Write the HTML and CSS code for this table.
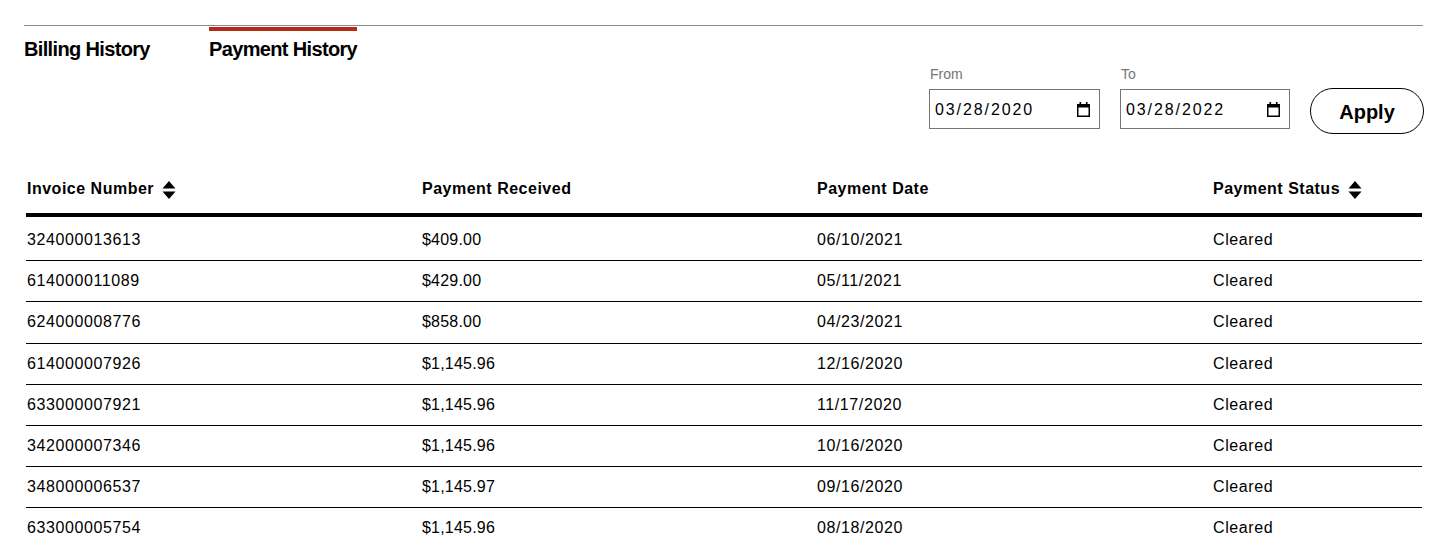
FILE: index.html
```html
<!DOCTYPE html>
<html lang="en">
<head>
<meta charset="utf-8">
<title>Payment History</title>
<link rel="stylesheet" href="styles.css">
</head>
<body>
<main class="page">
  <nav class="tabs">
    <a class="tab" href="#">Billing History</a>
    <a class="tab tab-active" href="#">Payment History</a>
  </nav>

  <form class="filters">
    <label class="field field-from">
      <span class="field-label">From</span>
      <span class="date-box">
        <input class="date-input" type="text" value="03/28/2020" readonly>
        <svg class="cal-icon" width="13" height="15" viewBox="0 0 13 15" aria-hidden="true">
          <rect x="0.75" y="2.75" width="11.5" height="11.5" fill="none" stroke="#000" stroke-width="1.5"/>
          <rect x="0" y="2" width="13" height="3.5" fill="#000"/>
          <rect x="2.5" y="0" width="1.6" height="3" fill="#000"/>
          <rect x="8.9" y="0" width="1.6" height="3" fill="#000"/>
        </svg>
      </span>
    </label>
    <label class="field field-to">
      <span class="field-label">To</span>
      <span class="date-box">
        <input class="date-input" type="text" value="03/28/2022" readonly>
        <svg class="cal-icon" width="13" height="15" viewBox="0 0 13 15" aria-hidden="true">
          <rect x="0.75" y="2.75" width="11.5" height="11.5" fill="none" stroke="#000" stroke-width="1.5"/>
          <rect x="0" y="2" width="13" height="3.5" fill="#000"/>
          <rect x="2.5" y="0" width="1.6" height="3" fill="#000"/>
          <rect x="8.9" y="0" width="1.6" height="3" fill="#000"/>
        </svg>
      </span>
    </label>
    <button class="apply" type="button">Apply</button>
  </form>

  <table class="history">
    <colgroup>
      <col class="col-a"><col class="col-b"><col class="col-c"><col class="col-d">
    </colgroup>
    <thead>
      <tr>
        <th><span class="th-inner">Invoice Number
          <svg class="sort-icon" width="14" height="18" viewBox="0 0 14 18" aria-hidden="true"><path d="M7 0 L13.5 7.6 H0.5 Z M0.5 10.4 H13.5 L7 18 Z" fill="#000"/></svg></span></th>
        <th><span class="th-inner">Payment Received</span></th>
        <th><span class="th-inner">Payment Date</span></th>
        <th><span class="th-inner">Payment Status
          <svg class="sort-icon" width="14" height="18" viewBox="0 0 14 18" aria-hidden="true"><path d="M7 0 L13.5 7.6 H0.5 Z M0.5 10.4 H13.5 L7 18 Z" fill="#000"/></svg></span></th>
      </tr>
    </thead>
    <tbody>
      <tr><td>324000013613</td><td class="amount">$409.00</td><td>06/10/2021</td><td>Cleared</td></tr>
      <tr><td>614000011089</td><td class="amount">$429.00</td><td>05/11/2021</td><td>Cleared</td></tr>
      <tr><td>624000008776</td><td class="amount">$858.00</td><td>04/23/2021</td><td>Cleared</td></tr>
      <tr><td>614000007926</td><td class="amount">$1,145.96</td><td>12/16/2020</td><td>Cleared</td></tr>
      <tr><td>633000007921</td><td class="amount">$1,145.96</td><td>11/17/2020</td><td>Cleared</td></tr>
      <tr><td>342000007346</td><td class="amount">$1,145.96</td><td>10/16/2020</td><td>Cleared</td></tr>
      <tr><td>348000006537</td><td class="amount">$1,145.97</td><td>09/16/2020</td><td>Cleared</td></tr>
      <tr><td>633000005754</td><td class="amount">$1,145.96</td><td>08/18/2020</td><td>Cleared</td></tr>
    </tbody>
  </table>
</main>
</body>
</html>
```

FILE: styles.css
```css
* { box-sizing: border-box; }

body {
  margin: 0;
  background: #fff;
  color: #000;
  font-family: "Liberation Sans", Arial, sans-serif;
}

.page {
  width: 1399px;
  margin-left: 24px;
  padding-top: 25px;
}

/* Tabs */
.tabs {
  display: grid;
  grid-template-columns: 185px auto;
  justify-content: start;
  border-top: 1px solid #8a8a8a;
  padding-top: 1px;
}

.tab {
  justify-self: start;
  border-top: 4px solid transparent;
  padding-top: 6px;
  font-size: 20px;
  line-height: 24px;
  font-weight: 700;
  letter-spacing: -0.65px;
  color: #000;
  text-decoration: none;
}

.tab-active {
  border-top-color: #b5291c;
}

/* Filters */
.filters {
  display: flex;
  justify-content: flex-end;
  align-items: flex-start;
  gap: 20px;
  margin: 5px -1px 0 0;
}

.field {
  display: flex;
  flex-direction: column;
  gap: 7px;
}

.field-label {
  font-size: 14px;
  line-height: 16px;
  color: #747676;
  padding-left: 1px;
}

.date-box {
  display: flex;
  align-items: center;
  height: 40px;
  border: 1px solid #767676;
  padding: 1px 9px 0 5px;
}

.field-from .date-box { width: 171px; }
.field-to .date-box { width: 170px; }

.date-input {
  flex: 1;
  min-width: 0;
  border: 0;
  padding: 0;
  margin: 0;
  background: transparent;
  outline: none;
  color: #000;
  font-family: "Liberation Sans", Arial, sans-serif;
  font-size: 16px;
  letter-spacing: 1.9px;
}

.cal-icon {
  flex: 0 0 auto;
  display: block;
  margin-top: -1px;
}

.apply {
  margin-top: 22px;
  width: 114px;
  height: 46px;
  border: 1px solid #000;
  border-radius: 23px;
  background: #fff;
  color: #000;
  font-family: "Liberation Sans", Arial, sans-serif;
  font-size: 20px;
  font-weight: 700;
  padding: 2px 0 0;
  cursor: pointer;
}

/* Table */
.history {
  margin: 44px 0 0 2px;
  width: 1396px;
  border-collapse: collapse;
  table-layout: fixed;
}

.col-a, .col-b { width: 395px; }
.col-c { width: 396px; }
.col-d { width: 210px; }

.history th {
  text-align: left;
  font-size: 16px;
  font-weight: 700;
  letter-spacing: 0.5px;
  line-height: 20px;
  padding: 1px 0 14px 1px;
  border-bottom: 4px solid #000;
}

.th-inner {
  display: inline-flex;
  align-items: center;
  gap: 8px;
}

.sort-icon {
  display: block;
  margin-top: 1px;
}

.history td {
  font-size: 16px;
  letter-spacing: 0.6px;
  line-height: 20px;
  padding: 10px 1px 10.2px;
  border-bottom: 1px solid #000;
  white-space: nowrap;
}

.history td.amount {
  letter-spacing: 0.2px;
}

.history tbody tr:first-child td {
  padding-top: 13px;
}
```
